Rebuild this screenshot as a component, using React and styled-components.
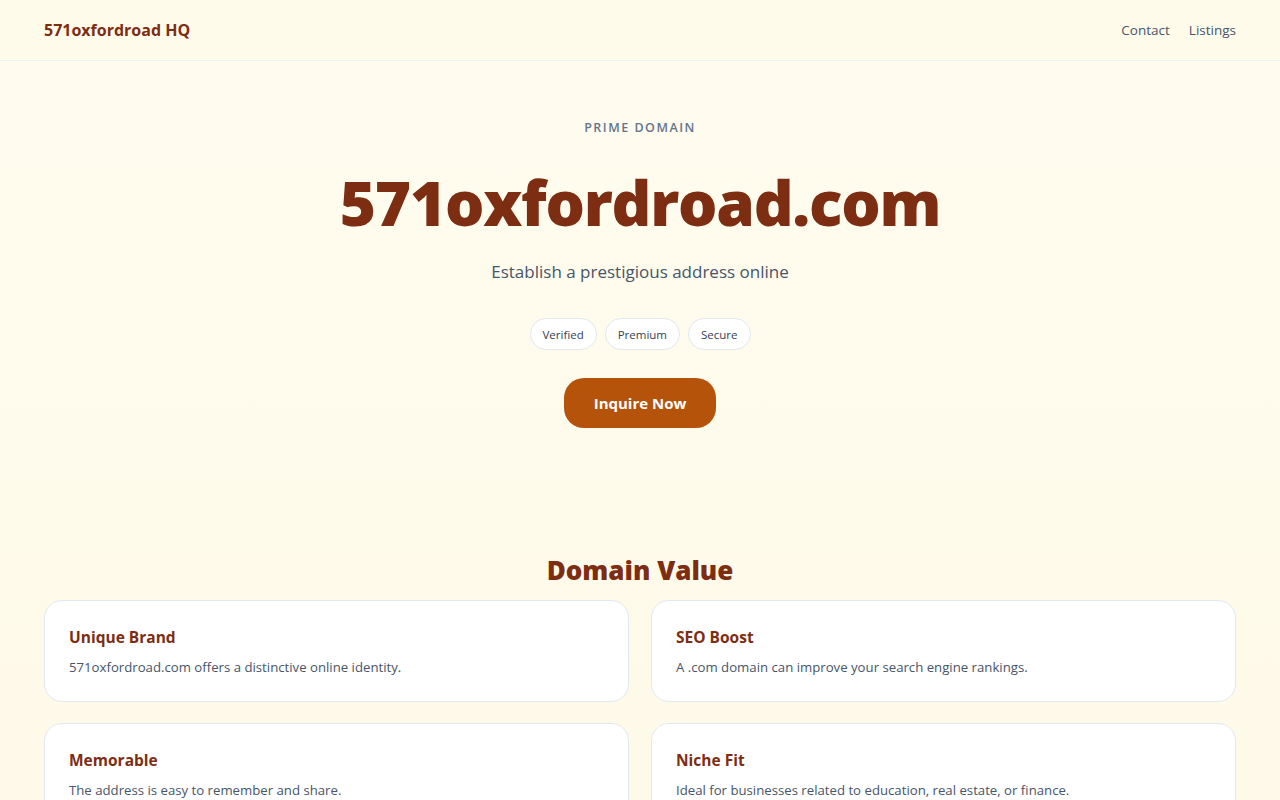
import React from "react";
import styled, { createGlobalStyle } from "styled-components";

const GlobalStyle = createGlobalStyle`
  * { box-sizing: border-box; }
  html, body {
    margin: 0;
    padding: 0;
  }
  body {
    font-family: "Open Sans", "Noto Sans", sans-serif;
    background: linear-gradient(180deg, #fffdf0 0%, #fef9e8 100%);
    color: #334155;
    min-height: 100vh;
  }
`;

const Header = styled.header`
  height: 61px;
  background: #fffbeb;
  border-bottom: 1px solid #eef0f7;
  display: flex;
  align-items: center;
  justify-content: space-between;
  padding: 0 44px;
`;

const Logo = styled.a`
  font-size: 16px;
  font-weight: 700;
  color: #7c2d12;
  text-decoration: none;
`;

const Nav = styled.nav`
  display: flex;
  gap: 19px;
`;

const NavLink = styled.a`
  font-size: 13.5px;
  color: #475569;
  text-decoration: none;
`;

const Hero = styled.section`
  display: flex;
  flex-direction: column;
  align-items: center;
  padding: 58px 44px 0;
  height: 491px;
`;

const Eyebrow = styled.p`
  margin: 0;
  font-size: 12.5px;
  font-weight: 600;
  letter-spacing: 0.12em;
  color: #64748b;
  text-transform: uppercase;
`;

const Title = styled.h1`
  margin: 29px 0 0;
  font-size: 62px;
  line-height: 1.2;
  font-weight: 800;
  letter-spacing: -0.02em;
  color: #7c2d12;
`;

const Subtitle = styled.p`
  margin: 21px 0 0;
  font-size: 17px;
  color: #475569;
`;

const Chips = styled.div`
  display: flex;
  gap: 8px;
  margin-top: 35px;
`;

const Chip = styled.span`
  height: 32px;
  padding: 0 12px;
  display: inline-flex;
  align-items: center;
  background: #ffffff;
  border: 1px solid #e2e8f0;
  border-radius: 999px;
  font-size: 11.5px;
  color: #334155;
`;

const Button = styled.button`
  margin-top: 28px;
  width: 152px;
  height: 50px;
  border: none;
  border-radius: 20px;
  background: #b45309;
  color: #ffffff;
  font-family: inherit;
  font-size: 15px;
  font-weight: 700;
  cursor: pointer;
`;

const Features = styled.section`
  padding: 0 44px;
`;

const SectionTitle = styled.h2`
  margin: 0 0 12px;
  text-align: center;
  font-size: 26px;
  font-weight: 800;
  color: #7c2d12;
`;

const Grid = styled.div`
  display: grid;
  grid-template-columns: 1fr 1fr;
  gap: 21px 22px;
`;

const Card = styled.div`
  background: #ffffff;
  border: 1px solid #e2e8f0;
  border-radius: 18px;
  padding: 25px 24px;
  height: 102px;
`;

const CardTitle = styled.h3`
  margin: 0;
  font-size: 15.5px;
  font-weight: 700;
  color: #7c2d12;
`;

const CardText = styled.p`
  margin: 10px 0 0;
  font-size: 13.2px;
  color: #475569;
`;

const features = [
  { title: "Unique Brand", text: "571oxfordroad.com offers a distinctive online identity." },
  { title: "SEO Boost", text: "A .com domain can improve your search engine rankings." },
  { title: "Memorable", text: "The address is easy to remember and share." },
  { title: "Niche Fit", text: "Ideal for businesses related to education, real estate, or finance." },
];

export default function App() {
  return (
    <>
      <GlobalStyle />
      <Header>
        <Logo href="#">571oxfordroad HQ</Logo>
        <Nav>
          <NavLink href="#">Contact</NavLink>
          <NavLink href="#">Listings</NavLink>
        </Nav>
      </Header>
      <Hero>
        <Eyebrow>Prime Domain</Eyebrow>
        <Title>571oxfordroad.com</Title>
        <Subtitle>Establish a prestigious address online</Subtitle>
        <Chips>
          <Chip>Verified</Chip>
          <Chip>Premium</Chip>
          <Chip>Secure</Chip>
        </Chips>
        <Button>Inquire Now</Button>
      </Hero>
      <Features>
        <SectionTitle>Domain Value</SectionTitle>
        <Grid>
          {features.map((f) => (
            <Card key={f.title}>
              <CardTitle>{f.title}</CardTitle>
              <CardText>{f.text}</CardText>
            </Card>
          ))}
        </Grid>
      </Features>
    </>
  );
}
